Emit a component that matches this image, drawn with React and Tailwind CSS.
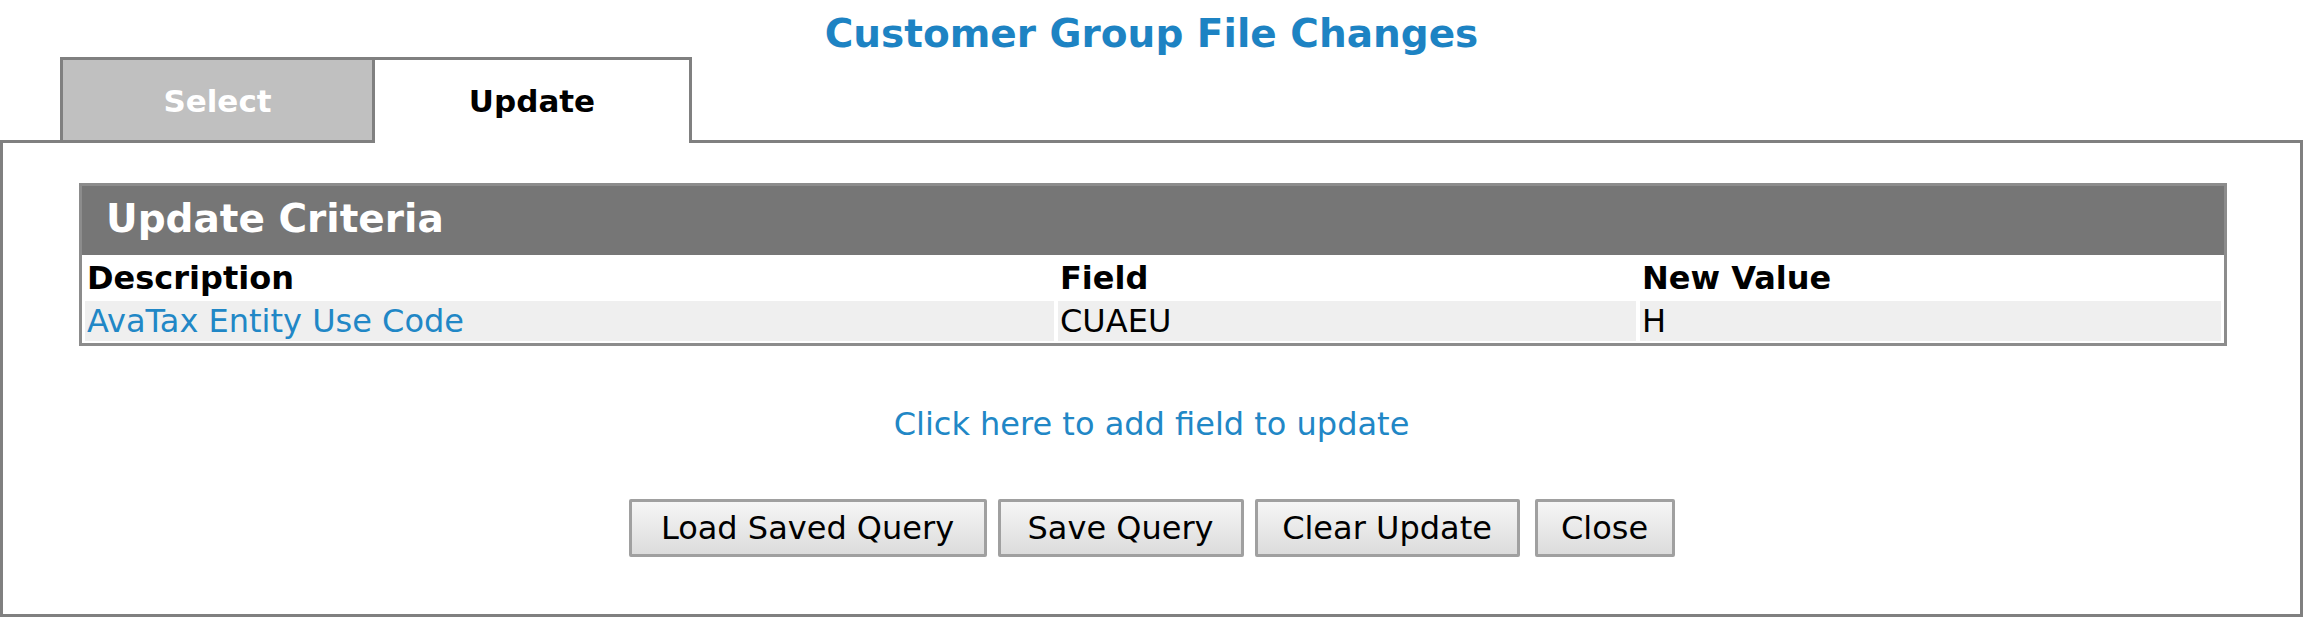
const font = { fontFamily: '"DejaVu Sans", Verdana, sans-serif' };

const rows = [{ description: "AvaTax Entity Use Code", field: "CUAEU", value: "H" }];

const buttons = [
  { label: "Load Saved Query", w: "w-[358px]" },
  { label: "Save Query", w: "w-[246px]" },
  { label: "Clear Update", w: "w-[265px]" },
  { label: "Close", w: "w-[140px] ml-[4px]" },
];

const App = () => {
  return (
    <div className="w-[2303px] h-[617px] overflow-hidden bg-white" style={font}>
      <h1 className="h-[57px] pt-[14px] text-center text-[39px] leading-[39px] font-bold text-[#1d83c3]">
        Customer Group File Changes
      </h1>

      {/* tabs */}
      <div className="flex items-end h-[83px] pl-[60px]">
        <div className="w-[315px] h-[83px] flex items-center justify-center pt-[2px] bg-[#c0c0c0] border-t-[3px] border-x-[3px] border-[#808080] text-white font-bold text-[31px]">
          Select
        </div>
        <div className="relative z-10 w-[317px] h-[86px] -mb-[3px] flex items-center justify-center pb-[1px] bg-white border-t-[3px] border-r-[3px] border-[#808080] text-black font-bold text-[31px]">
          Update
        </div>
      </div>

      <div className="h-[477px] border-[3px] border-[#808080] pt-[40px] pl-[76px]">
        <div className="w-[2148px] border-[3px] border-[#8c8c8c]">
          <div className="h-[69px] flex items-center pl-[24px] pb-[2px] bg-[#767676] text-white font-bold text-[39px]">
            Update Criteria
          </div>
          <div className="grid grid-cols-[969px_578px_1fr] gap-x-[4px] pl-[3px] pr-[3px] pb-[2px] text-[32px]">
            <div className="h-[46px] leading-[46px] pl-[2px] font-bold text-black">Description</div>
            <div className="h-[46px] leading-[46px] pl-[2px] font-bold text-black">Field</div>
            <div className="h-[46px] leading-[46px] pl-[2px] font-bold text-black">New Value</div>
            {rows.map((r) => (
              <div key={r.field} className="contents">
                <div className="h-[40px] leading-[40px] pl-[2px] bg-[#efefef] text-[#2187c6]">{r.description}</div>
                <div className="h-[40px] leading-[40px] pl-[2px] bg-[#efefef] text-black">{r.field}</div>
                <div className="h-[40px] leading-[40px] pl-[2px] bg-[#efefef] text-black">{r.value}</div>
              </div>
            ))}
          </div>
        </div>

        <div className="-ml-[76px] mt-[58px] text-center text-[32px] leading-[40px] text-[#2187c6]">
          Click here to add field to update
        </div>

        <div className="-ml-[76px] mt-[55px] flex justify-center gap-[11px]">
          {buttons.map((b) => (
            <button
              key={b.label}
              className={`${b.w} h-[58px] flex items-center justify-center rounded-[2px] border-[3px] border-[#a0a0a0] bg-gradient-to-b from-[#f6f6f6] to-[#dcdcdc] text-black text-[32px] whitespace-nowrap`}
            >
              {b.label}
            </button>
          ))}
        </div>
      </div>
    </div>
  );
};

export default App;
